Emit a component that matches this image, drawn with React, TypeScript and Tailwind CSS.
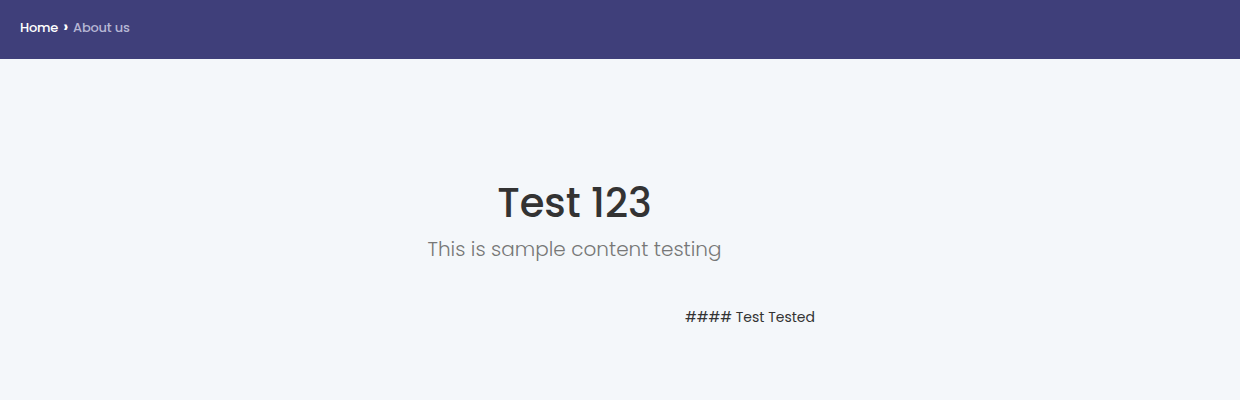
import React from 'react';

const App = () => {
  return (
    <div className="min-h-[400px] bg-[#f4f7fa] font-['Poppins','Open_Sans',sans-serif]">
      <header className="h-[59px] bg-[#3f3f7a] flex items-center px-5 pb-1">
        <nav className="flex items-center gap-[5px] text-[13px] font-medium tracking-[-0.2px]">
          <span className="text-white">Home</span>
          <span className="text-white text-[15px] font-bold leading-none -mt-[2px]">›</span>
          <span className="text-[#b6b6d4]">About us</span>
        </nav>
      </header>

      <main className="pt-[120px]">
        <div className="w-[1149px] text-center">
          <h1 className="text-[40px] leading-[48px] font-medium text-[#333333]">Test 123</h1>
          <p className="mt-[7px] text-[20px] leading-[30px] font-light text-[#777777]">
            This is sample content testing
          </p>
        </div>
        <div className="mt-[43px] pl-[685px] text-[14px] leading-[20px] text-[#333333]">
          #### Test Tested
        </div>
      </main>
    </div>
  );
};

export default App;
